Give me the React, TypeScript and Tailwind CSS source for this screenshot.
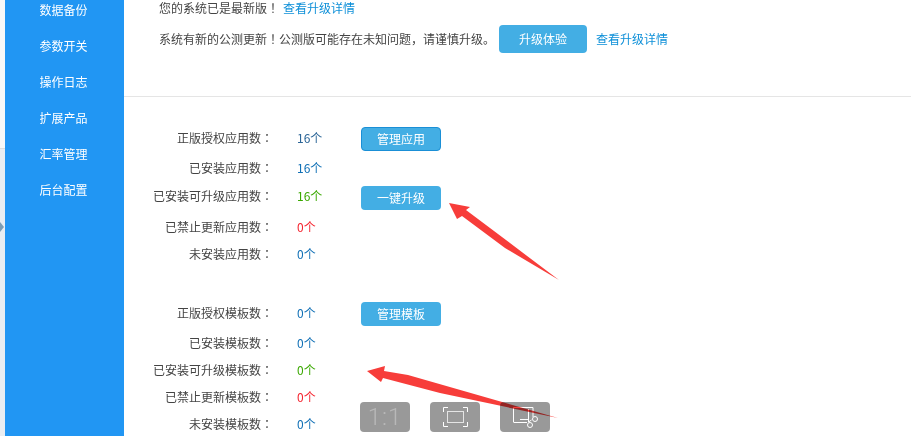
const menu = ['数据备份', '参数开关', '操作日志', '扩展产品', '汇率管理', '后台配置']

const appRows = [
  { label: '正版授权应用数：', value: '16个', color: 'text-[#2a6496]', top: 'mt-0' },
  { label: '已安装应用数：', value: '16个', color: 'text-[#0f6fb5]', top: 'mt-1.5' },
  { label: '已安装可升级应用数：', value: '16个', color: 'text-[#3aa800]', top: 'mt-1' },
  { label: '已禁止更新应用数：', value: '0个', color: 'text-[#f5222d]', top: 'mt-[7px]' },
  { label: '未安装应用数：', value: '0个', color: 'text-[#0f6fb5]', top: 'mt-[3px]' },
]

const tplRows = [
  { label: '正版授权模板数：', value: '0个', color: 'text-[#0f6fb5]', top: 'mt-0' },
  { label: '已安装模板数：', value: '0个', color: 'text-[#0f6fb5]', top: 'mt-1.5' },
  { label: '已安装可升级模板数：', value: '0个', color: 'text-[#3aa800]', top: 'mt-[3px]' },
  { label: '已禁止更新模板数：', value: '0个', color: 'text-[#f5222d]', top: 'mt-[3px]' },
  { label: '未安装模板数：', value: '0个', color: 'text-[#0f6fb5]', top: 'mt-[3px]' },
]

function Btn({ text, className = '' }: { text: string; className?: string }) {
  return (
    <button className={'h-6 w-20 rounded bg-[#43aee4] text-xs text-white ' + className}>
      {text}
    </button>
  )
}

function StatRow({ row, button }: { row: { label: string; value: string; color: string; top: string }; button?: React.ReactNode }) {
  return (
    <div className={'flex h-6 items-center ' + row.top}>
      <div className="w-[273px] text-right font-['Noto_Sans_CJK_TC','Liberation_Sans',sans-serif] text-xs text-[#444]">{row.label}</div>
      <div className={'ml-6 w-16 text-xs ' + row.color}>{row.value}</div>
      {button}
    </div>
  )
}

function ToolBtn({ children }: { children: React.ReactNode }) {
  return (
    <div className="flex h-[30px] w-[50px] items-center justify-center rounded bg-[#999]">
      {children}
    </div>
  )
}

export default function App() {
  return (
    <div className="relative flex h-[436px] w-[911px] overflow-hidden bg-white font-['Noto_Sans_CJK_SC','Liberation_Sans',sans-serif]">
      <div className="flex w-[5px] flex-col">
        <div className="h-[149px] border-b border-[#ddd] bg-[#f8f8f8]"></div>
        <div className="flex-1 bg-[#e9edf2] pt-[73px]">
          <div className="h-0 w-0 border-y-[5px] border-l-[4px] border-y-transparent border-l-[#7d9db5]"></div>
        </div>
      </div>

      <div className="w-[119px] bg-[#2196f3] pr-0.5 text-center text-xs text-white">
        {menu.map((m) => (
          <div key={m} className="flex h-9 -translate-y-2 items-center justify-center">{m}</div>
        ))}
      </div>

      <div className="flex-1">
        <div className="h-[97px] border-b border-[#e5e5e5] pl-[35px] text-xs text-[#444]">
          <div className="flex h-[15px] items-center font-['Noto_Sans_CJK_TC','Liberation_Sans',sans-serif]">
            您的系统已是最新版！
            <a className="ml-1 font-['Noto_Sans_CJK_SC','Liberation_Sans',sans-serif] text-[#0d8fd8]">查看升级详情</a>
          </div>
          <div className="mt-2.5 flex h-7 items-center">
            <span>
              系统有新的公测更新<span className="font-['Noto_Sans_CJK_TC','Liberation_Sans',sans-serif]">！</span>公测版可能存在未知问题，请谨慎升级。
            </span>
            <button className="ml-1 h-7 w-[88px] rounded bg-[#43aee4] text-xs text-white">升级体验</button>
            <a className="ml-[9px] text-[#0d8fd8]">查看升级详情</a>
          </div>
        </div>

        <div className="-ml-[124px] pt-[29px]">
          {appRows.map((r, i) => (
            <StatRow
              key={r.label}
              row={r}
              button={
                i === 0 ? (
                  <Btn text="管理应用" className="mt-0.5 border border-[#1a8fd6]" />
                ) : i === 2 ? (
                  <Btn text="一键升级" className="mt-1" />
                ) : undefined
              }
            />
          ))}
        </div>

        <div className="-ml-[124px] mt-[35px]">
          {tplRows.map((r, i) => (
            <StatRow
              key={r.label}
              row={r}
              button={i === 0 ? <Btn text="管理模板" className="mt-0.5" /> : undefined}
            />
          ))}
        </div>
      </div>

      {/* viewer toolbar */}
      <div className="absolute left-[360px] top-[402px] flex gap-5">
        <ToolBtn>
          <span className="font-['Roboto',sans-serif] text-2xl font-light tracking-[1px] text-[#b8b8b8]">1:1</span>
        </ToolBtn>
        <ToolBtn>
          <svg width="25" height="20" viewBox="0 0 25 20" fill="none" stroke="#fff" strokeWidth="1">
            <path d="M.5 5V.5H5M20 .5h4.5V5M24.5 15v4.5H20M5 19.5H.5V15" />
            <rect x="4.5" y="4.5" width="16" height="11" stroke="#e5e5e5" />
          </svg>
        </ToolBtn>
        <ToolBtn>
          <svg width="30" height="24" viewBox="0 0 30 24" fill="none" stroke="#fff" strokeWidth="1">
            <path d="M3.5 17V2.5H23V12M3.5 17.5H17M10 14.5H18" />
            <path d="M18.5 4v13l3-2" />
            <circle cx="20" cy="20" r="2.5" />
            <circle cx="25" cy="14" r="2.5" />
          </svg>
        </ToolBtn>
      </div>

      {/* annotation arrows */}
      <svg className="absolute inset-0 mix-blend-multiply" width="911" height="436" viewBox="0 0 911 436">
        <polygon points="449,203 470,207 466,210 559,280 505,248 462,216 457,219" fill="#f73d3a" />
        <polygon points="367,371 385,366 384,371 408,375 558,418 440,393 383,378 381,382" fill="#f73d3a" />
      </svg>
    </div>
  )
}
